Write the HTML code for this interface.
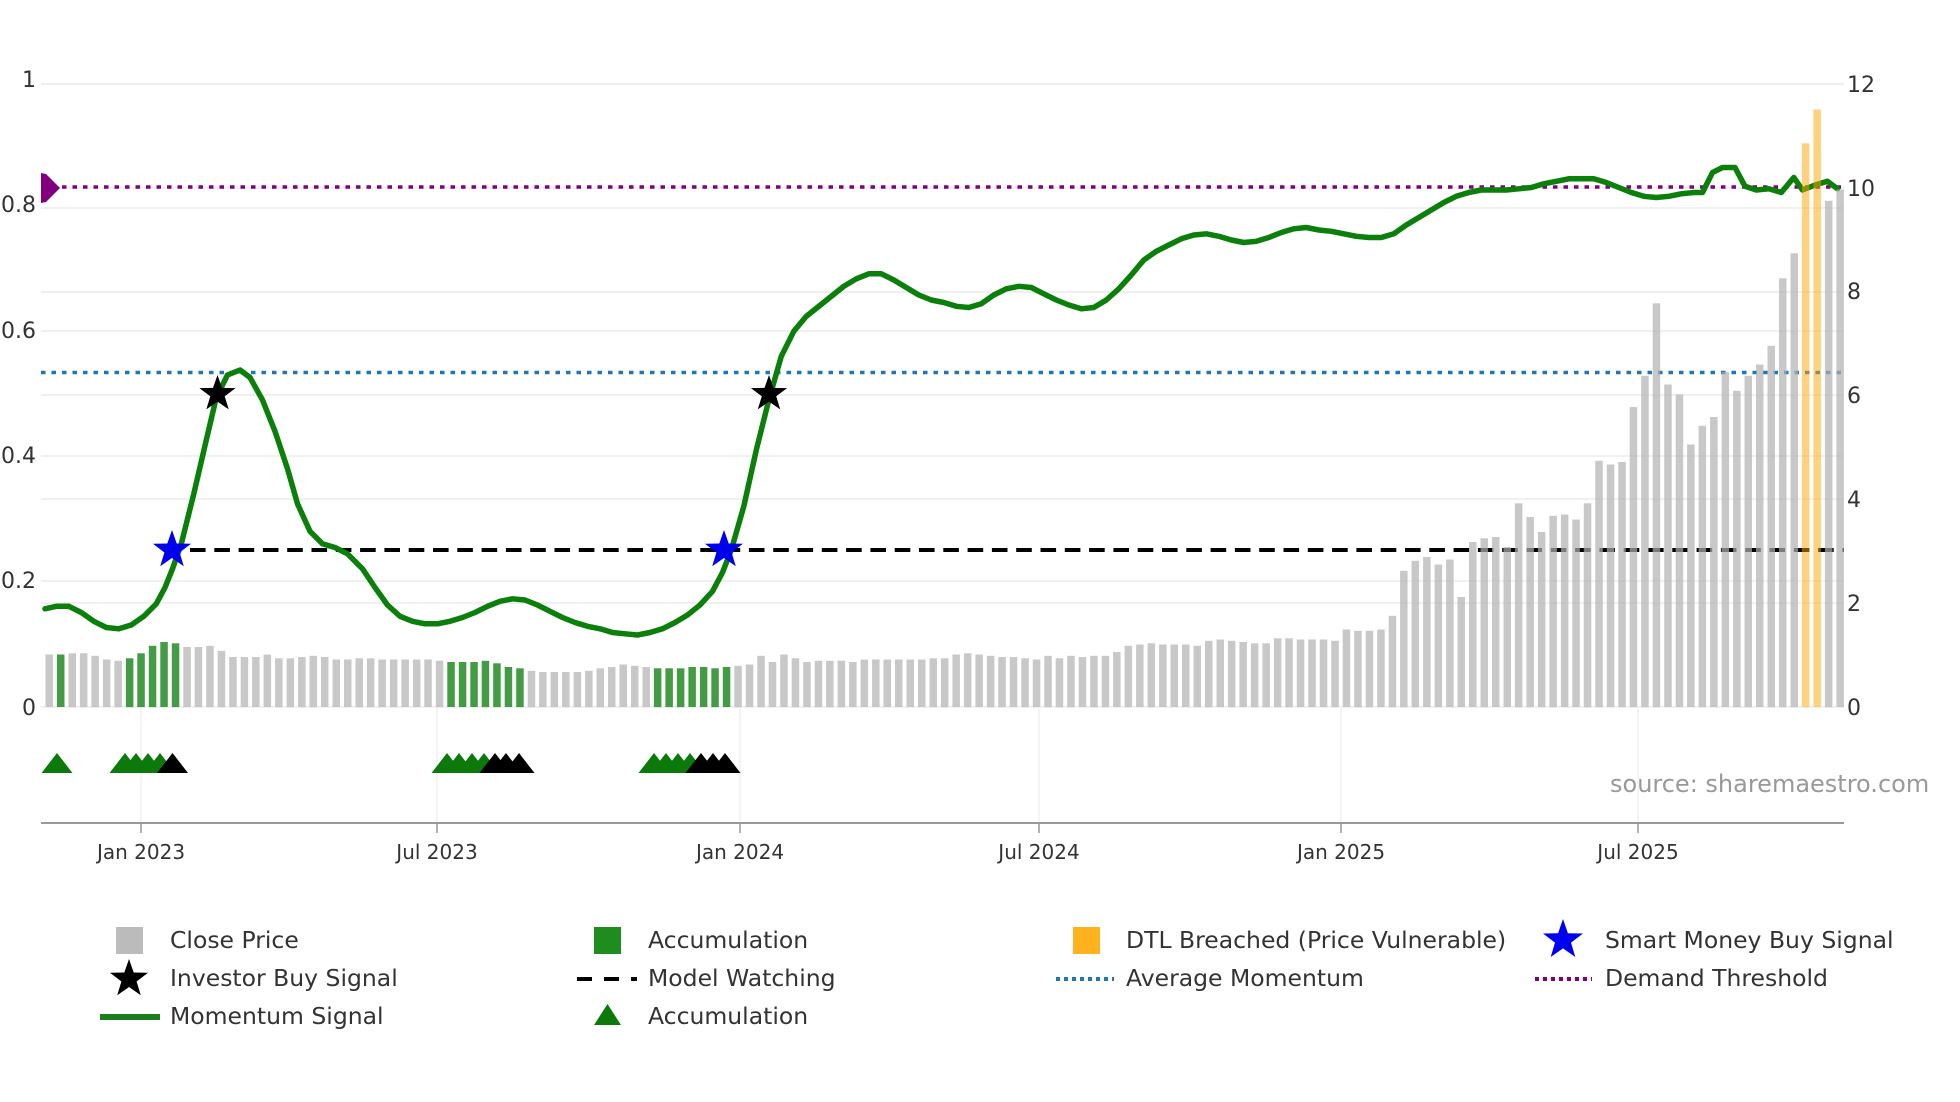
<!DOCTYPE html>
<html><head><meta charset="utf-8"><style>
html,body{margin:0;padding:0;background:#fff;}
svg{display:block;font-family:"DejaVu Sans","Liberation Sans",sans-serif;}
</style></head><body>
<svg id="c" width="1960" height="1102" viewBox="0 0 1960 1102" xmlns="http://www.w3.org/2000/svg">
<g id="grid" stroke="#ececec" stroke-width="1.5"></g>
<g id="lines"></g>
<g id="bars"></g>
<g id="over"></g>
<g fill="#333" font-size="22">
<text x="36" y="87" text-anchor="end">1</text>
<text x="36" y="212" text-anchor="end">0.8</text>
<text x="36" y="338" text-anchor="end">0.6</text>
<text x="36" y="463" text-anchor="end">0.4</text>
<text x="36" y="588" text-anchor="end">0.2</text>
<text x="36" y="715" text-anchor="end">0</text>
<text x="1847" y="92">12</text>
<text x="1847" y="196">10</text>
<text x="1847" y="299">8</text>
<text x="1847" y="403">6</text>
<text x="1847" y="507">4</text>
<text x="1847" y="611">2</text>
<text x="1847" y="715">0</text>
</g>
<text x="1610" y="792" font-size="24" fill="#999">source: sharemaestro.com</text>
<line x1="41" y1="823" x2="1844" y2="823" stroke="#999" stroke-width="2"/>
<g stroke="#999" stroke-width="1.5">
<line x1="141" y1="823" x2="141" y2="833"/><line x1="437" y1="823" x2="437" y2="833"/><line x1="740" y1="823" x2="740" y2="833"/><line x1="1039" y1="823" x2="1039" y2="833"/><line x1="1341" y1="823" x2="1341" y2="833"/><line x1="1638" y1="823" x2="1638" y2="833"/>
</g>
<g fill="#333" font-size="20" text-anchor="middle">
<text x="141" y="859">Jan 2023</text><text x="437" y="859">Jul 2023</text><text x="740" y="859">Jan 2024</text><text x="1039" y="859">Jul 2024</text><text x="1341" y="859">Jan 2025</text><text x="1638" y="859">Jul 2025</text>
</g>
<g font-size="23.5" fill="#333">
<rect x="116" y="927" width="27" height="27" fill="#bbbbbb"/><text x="170" y="948">Close Price</text>
<rect x="594" y="927" width="27" height="27" fill="#1f8c1f"/><text x="648" y="948">Accumulation</text>
<rect x="1073" y="927" width="27" height="27" fill="#ffb11e"/><text x="1126" y="948">DTL Breached (Price Vulnerable)</text>
<polygon id="ls1" fill="#0000ee"/><text x="1605" y="948">Smart Money Buy Signal</text>
<polygon id="ls2" fill="#000"/><text x="170" y="986">Investor Buy Signal</text>
<line x1="577" y1="979" x2="637" y2="979" stroke="#000" stroke-width="4" stroke-dasharray="15,12"/><text x="648" y="986">Model Watching</text>
<line x1="1056" y1="979" x2="1114" y2="979" stroke="#1f77b4" stroke-width="4" stroke-dasharray="4,4"/><text x="1126" y="986">Average Momentum</text>
<line x1="1535" y1="979" x2="1592" y2="979" stroke="#800080" stroke-width="4" stroke-dasharray="4,4"/><text x="1605" y="986">Demand Threshold</text>
<line x1="100" y1="1017" x2="160" y2="1017" stroke="#1a7f1a" stroke-width="6"/><text x="170" y="1024">Momentum Signal</text>
<polygon points="594,1025 621,1025 607.5,1004" fill="#0b7a0b"/><text x="648" y="1024">Accumulation</text>
</g>
</svg>
<script>
var NS="http://www.w3.org/2000/svg";
function el(p,t,a){var e=document.createElementNS(NS,t);for(var k in a)e.setAttribute(k,a[k]);document.getElementById(p).appendChild(e);return e;}
function star(cx,cy,R){var r=R*0.4,s=[];for(var i=0;i<10;i++){var a=-Math.PI/2+i*Math.PI/5,rr=i%2?r:R;s.push((cx+rr*Math.cos(a)).toFixed(1)+","+(cy+rr*Math.sin(a)).toFixed(1));}return s.join(" ");}
[84,208,331,456,581,707].forEach(function(y){el("grid","line",{x1:41,x2:1844,y1:y,y2:y});});
[84,188,292,395,499,603].forEach(function(y){el("grid","line",{x1:41,x2:1844,y1:y,y2:y});});
[141,437,740,1039,1341,1638].forEach(function(x){el("grid","line",{x1:x,x2:x,y1:707,y2:823,"stroke":"#f0f0f0"});});
el("lines","line",{x1:41,x2:1844,y1:187,y2:187,stroke:"#800080","stroke-width":3.5,"stroke-dasharray":"4.5,6"});
el("lines","line",{x1:41,x2:1844,y1:372.5,y2:372.5,stroke:"#1f77b4","stroke-width":3.5,"stroke-dasharray":"4.5,6"});
el("lines","line",{x1:190,x2:1844,y1:550,y2:550,stroke:"#000","stroke-width":4,"stroke-dasharray":"15.6,8.7"});
var P=[[36,487],[45,485],[55,485],[65,490],[75,497],[85,502],[95,503],[105,500],[115,493],[125,483],[132,470],[138,455],[145,435],[155,395],[165,352],[173,318],[182,300],[192,296],[200,302],[210,320],[220,345],[230,375],[238,403],[248,425],[258,435],[268,438],[278,443],[290,455],[300,470],[310,484],[320,493],[330,497],[340,499],[350,499],[360,497],[370,494],[380,490],[390,485],[400,481],[410,479],[420,480],[430,484],[440,489],[450,494],[460,498],[470,501],[480,503],[490,506],[500,507],[510,508],[520,506],[530,503],[540,498],[550,492],[560,484],[570,473],[578,458],[585,440],[595,405],[605,360],[615,320],[625,285],[635,265],[645,253],[655,245],[665,237],[675,229],[685,223],[695,219],[705,219],[715,224],[725,230],[735,236],[745,240],[755,242],[765,245],[775,246],[785,243],[795,236],[805,231],[815,229],[825,230],[835,235],[845,240],[855,244],[865,247],[875,246],[885,240],[895,231],[905,220],[915,208],[925,201],[935,196],[945,191],[955,188],[965,187],[975,189],[985,192],[995,194],[1005,193],[1015,190],[1025,186],[1035,183],[1045,182],[1055,184],[1065,185],[1075,187],[1085,189],[1095,190],[1105,190],[1115,187],[1125,180],[1135,174],[1145,168],[1155,162],[1165,157],[1175,154],[1185,152],[1195,152],[1205,152],[1215,151],[1225,150],[1235,147],[1245,145],[1255,143],[1265,143],[1275,143],[1285,146],[1295,150],[1305,154],[1315,157],[1325,158],[1335,157],[1345,155],[1355,154],[1362,154],[1370,138],[1378,134],[1388,134],[1396,149],[1405,152],[1415,151],[1425,154],[1435,142],[1442,152],[1452,148],[1462,145],[1470,151]];
el("lines","polyline",{points:P.map(function(p){return (p[0]*1.25).toFixed(1)+","+(p[1]*1.25).toFixed(1);}).join(" "),fill:"none",stroke:"#0a7f0a","stroke-width":5.5,"stroke-linejoin":"round","stroke-linecap":"round"});
var T=[524,524,523,523,525,528,529,527,523,517,514,515,518,518,517,521,526,526,526,524,527,527,526,525,526,528,528,527,527,528,528,528,528,528,529,530,530,530,529,531,534,535,537,538,538,538,538,537,535,534,532,533,534,535,535,535,534,534,535,534,533,532,525,530,524,527,530,529,529,529,530,528,528,528,528,528,528,527,527,524,523,524,525,526,526,527,528,525,527,525,526,525,525,522,517,516,515,516,516,516,517,513,512,513,514,515,515,511,511,512,512,512,513,504,505,505,504,493,457,449,446,452,448,478,434,431,430,438,403,414,426,413,412,416,403,369,372,370,326,301,243,308,316,356,341,334,298,313,301,292,277,223,203,115,88,161,152];
var G={1:1,7:1,8:1,9:1,10:1,11:1,35:1,36:1,37:1,38:1,39:1,40:1,41:1,53:1,54:1,55:1,56:1,57:1,58:1,59:1};
for(var i=0;i<T.length;i++){var x=45.5+i*11.48,h=(566-T[i])*1.25,f="#b0b0b0",o=0.7;
 if(G[i]){f="#228b22";o=0.85;} if(i==153||i==154){f="#ffa500";o=0.5;}
 el("bars","rect",{x:x.toFixed(1),y:(707-h).toFixed(1),width:7.5,height:h.toFixed(1),fill:f,"fill-opacity":o});}
el("over","polygon",{points:"41,173 46,174 60,188 46,202 41,203",fill:"#800080"});
function tri(cx,c){el("over","polygon",{points:(cx-15.5)+",773 "+(cx+15.5)+",773 "+cx+",753",fill:c});}
[57,125,136,148,160,447,459,472,484,654,666,678,690].forEach(function(x){tri(x,"#0b7a0b");});
[172.5,495,506,519,701,713,725].forEach(function(x){tri(x,"#000");});
el("over","polygon",{points:star(172,550,20),fill:"#0000ee"});
el("over","polygon",{points:star(724,550,20),fill:"#0000ee"});
el("over","polygon",{points:star(217.5,394,19),fill:"#000"});
el("over","polygon",{points:star(769,394,19),fill:"#000"});
document.getElementById("ls1").setAttribute("points",star(1563,940,21));
document.getElementById("ls2").setAttribute("points",star(129,979,20));
</script>
</body></html>
